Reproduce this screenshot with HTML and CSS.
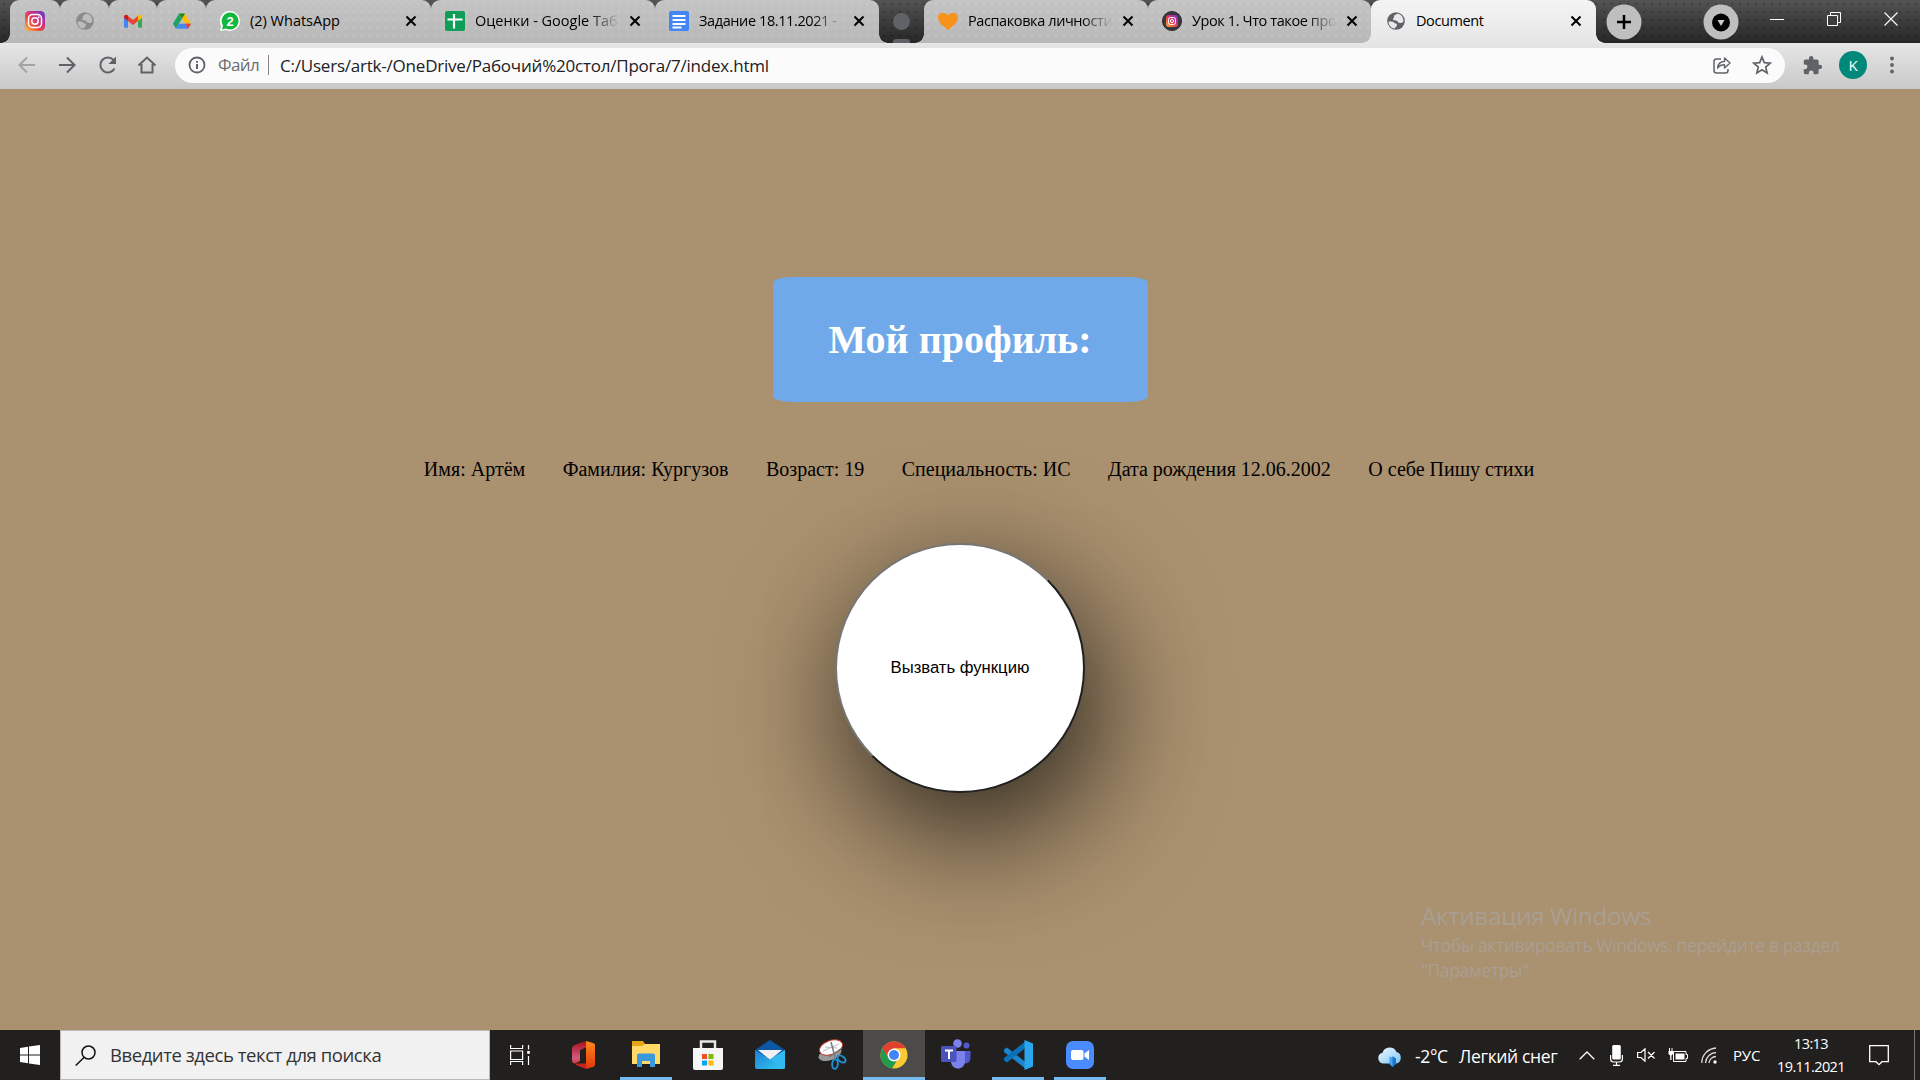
FILE: index.html
```html
<!DOCTYPE html>
<html lang="ru">
<head>
<meta charset="utf-8">
<title>Document</title>
<link rel="stylesheet" href="styles.css">
</head>
<body>
<svg class="defs" width="0" height="0">
  <defs>
    <linearGradient id="ig" x1="0" y1="1" x2="1" y2="0"><stop offset="0" stop-color="#fdc443"/><stop offset=".35" stop-color="#f0503c"/><stop offset=".65" stop-color="#c72c8e"/><stop offset="1" stop-color="#5a3fd0"/></linearGradient>
    <linearGradient id="cloud" x1="0" y1="0" x2="1" y2="1"><stop offset="0" stop-color="#f2faff"/><stop offset="1" stop-color="#7cc3f5"/></linearGradient>
    <linearGradient id="mailg" x1="0" y1="0" x2="1" y2="1"><stop offset="0" stop-color="#1e7fd0"/><stop offset="1" stop-color="#35c8f5"/></linearGradient>
    <linearGradient id="off" x1="0" y1="0" x2="0" y2="1"><stop offset="0" stop-color="#a80f1a"/><stop offset=".75" stop-color="#d05a80"/><stop offset="1" stop-color="#d23a3a"/></linearGradient>
    <linearGradient id="offr" x1="0" y1="0" x2="0" y2="1"><stop offset="0" stop-color="#ff8a1c"/><stop offset="1" stop-color="#e0360c"/></linearGradient>
    <symbol id="globe" viewBox="0 0 20 20"><circle cx="10" cy="10" r="8.800" fill="currentColor"/><path d="M2.500 10.500c2.500 0 4-.5 5.500 1s3 .5 3 2.500-2 1.500-2 3.500C5 17.500 2.500 14 2.500 10.500zM11.500 2.600c-1 1.400-3.500 1-3.500 2.900s-1 1.500-1 3 3 .5 4 1.500 1.500 2 3 2 2.500-.5 3.400-1.500c.2-4-2-7-5.900-7.900z" fill="var(--land)"/></symbol>
    <symbol id="close" viewBox="0 0 12 12"><path d="M1.500 1.500l9 9M10.500 1.500l-9 9" stroke="#000" stroke-width="2"/></symbol>
  </defs>
</svg>

<header class="strip">
  <div class="tab-group">
    <div class="tab pin w50"><svg class="fav" viewBox="0 0 20 20"><rect width="20" height="20" rx="4.500" fill="url(#ig)"/><rect x="3.500" y="3.500" width="13" height="13" rx="4" fill="none" stroke="#fff" stroke-width="1.500"/><circle cx="10" cy="10" r="3.200" fill="none" stroke="#fff" stroke-width="1.500"/><circle cx="13.800" cy="6.200" r=".9" fill="#fff"/></svg></div>
    <div class="tab pin w49"><svg class="fav dim" viewBox="0 0 20 20"><use href="#globe"/></svg></div>
    <div class="tab pin w48"><svg class="fav" viewBox="0 0 20 20"><path d="M1 5v10.500c0 .8.500 1.300 1.300 1.300H5V8z" fill="#4285f4"/><path d="M19 5v10.500c0 .8-.5 1.300-1.300 1.300H15V8z" fill="#34a853"/><path d="M5 5l5 4 5-4v5l-5 4-5-4z" fill="#ea4335"/><path d="M1 6c0-2.200 2.200-3 4-1.500v5.500L1 7z" fill="#c5221f"/><path d="M19 6c0-2.200-2.200-3-4-1.500v5.500l4-3z" fill="#fbbc04"/></svg></div>
    <div class="tab pin w49"><svg class="fav" viewBox="0 0 20 20"><path d="M7 2.500L1 12.800l3 5L10 7.500z" fill="#1ea362"/><path d="M7 2.500h6l6 10.300h-6z" fill="#ffba00"/><path d="M7 2.500h6l-3 5z" fill="#11873b"/><path d="M4 17.800l3-5h12l-3 5z" fill="#4688f4"/><path d="M13 12.800h6l-3 5z" fill="#ea4335"/></svg></div>
    <div class="tab w225"><svg class="fav" viewBox="0 0 20 20"><path d="M10 0a10 10 0 0 1 0 20 10 10 0 0 1-4-.9L0 20l1.200-5A10 10 0 0 1 10 0z" fill="#fff"/><path d="M10 1.500a8.500 8.500 0 1 1-4 16l-4 1 1-4a8.500 8.500 0 0 1 7-13z" fill="#12b83e"/><text class="badge-num" x="10" y="14.500">2</text></svg><span class="title">(2) WhatsApp</span><svg class="x"><use href="#close"/></svg></div>
    <div class="tab"><svg class="fav" viewBox="0 0 20 20"><rect width="20" height="20" rx="2" fill="#0f9d58"/><path d="M2.500 8.500h15M9 3v14.500" stroke="#fff" stroke-width="2.200"/></svg><span class="title fade">Оценки - Google Таб</span><svg class="x"><use href="#close"/></svg></div>
    <div class="tab last"><svg class="fav" viewBox="0 0 20 20"><rect width="20" height="20" rx="2" fill="#4285f4"/><path d="M3.500 5h13M3.500 9h13M3.500 13h13M3.500 16.500h9" stroke="#fff" stroke-width="1.800"/></svg><span class="title fade snug">Задание 18.11.2021 -</span><svg class="x"><use href="#close"/></svg></div>
  </div>
  <div class="group-chip"><i class="dot"></i><i class="bar"></i></div>
  <div class="tab-group second">
    <div class="tab"><svg class="fav" viewBox="0 0 20 20"><path d="M10 19C4 14.500 0 11 0 6.300 0 1 7 0 10 4.500 13 0 20 1 20 6.300 20 11 16 14.500 10 19z" fill="#f7931a"/></svg><span class="title fade snug">Распаковка личности</span><svg class="x"><use href="#close"/></svg></div>
    <div class="tab last w223"><svg class="fav" viewBox="0 0 20 20"><circle cx="10" cy="10" r="9.500" fill="#3a3640" stroke="#2a2a30"/><rect x="4" y="4" width="12" height="12" rx="3" fill="url(#ig)"/><rect x="6.500" y="6.500" width="7" height="7" rx="2" fill="none" stroke="#fff"/><circle cx="10" cy="10" r="1.600" fill="none" stroke="#fff"/></svg><span class="title fade snug">Урок 1. Что такое про</span><svg class="x"><use href="#close"/></svg></div>
  </div>
  <div class="tab-group active">
    <div class="tab last w225"><svg class="fav" viewBox="0 0 20 20"><use href="#globe"/></svg><span class="title snug">Document</span><svg class="x"><use href="#close"/></svg></div>
  </div>
  <svg class="round plus" viewBox="0 0 36 36"><circle cx="18" cy="18" r="17.500" fill="#bfbfbf"/><path d="M18 11v14M11 18h14" stroke="#000" stroke-width="2.500"/></svg>
  <svg class="round drop" viewBox="0 0 36 36"><circle cx="18" cy="18" r="17.500" fill="#bfbfbf"/><circle cx="18" cy="18.500" r="9" fill="#000"/><path d="M14.500 16h7L18 22z" fill="#ccc"/></svg>
  <svg class="wbtn" viewBox="0 0 14 14"><path d="M0 7.500h14" stroke="#fff"/></svg>
  <svg class="wbtn" viewBox="0 0 14 14"><path d="M.5 3.500h10v10h-10zM3.500 3V.5h10v10H11" fill="none" stroke="#fff"/></svg>
  <svg class="wbtn" viewBox="0 0 14 14"><path d="M.5.5l13 13M13.500.5l-13 13" stroke="#fff" stroke-width="1.100"/></svg>
</header>

<nav class="toolbar">
  <svg class="nav back" viewBox="0 0 20 20"><path d="M18 10H3M10 2.500L2.500 10l7.500 7.500" fill="none" stroke="currentColor" stroke-width="2"/></svg>
  <svg class="nav" viewBox="0 0 20 20"><path d="M2 10h15M10 2.500l7.500 7.500-7.500 7.500" fill="none" stroke="currentColor" stroke-width="2"/></svg>
  <svg class="nav reload" viewBox="0 0 20 20"><path d="M16.500 13.500A7.500 7.500 0 1 1 15.500 5" fill="none" stroke="currentColor" stroke-width="2"/><path d="M18 1.500V9h-7.500z" fill="currentColor"/></svg>
  <svg class="nav" viewBox="0 0 20 20"><path d="M1.500 10.500L10 2.500l8.500 8M4.500 9v8.500h11V9" fill="none" stroke="currentColor" stroke-width="2"/></svg>
  <div class="omnibox">
    <svg class="info" viewBox="0 0 18 18"><circle cx="9" cy="9" r="7.500" fill="none" stroke="currentColor" stroke-width="1.800"/><path d="M9 8v5M9 5v1.800" stroke="currentColor" stroke-width="2"/></svg>
    <span class="scheme">Файл</span>
    <span class="url">C:/Users/artk-/OneDrive/Рабочий%20стол/Прога/7/index.html</span>
    <svg class="act" viewBox="0 0 20 20"><path d="M9 4H4.500A2.500 2.500 0 0 0 2 6.500v9A2.500 2.500 0 0 0 4.500 18h9a2.500 2.500 0 0 0 2.500-2.500V14" fill="none" stroke="currentColor" stroke-width="1.500"/><path d="M5.500 13c.5-4.500 3-6.500 7-6.500V3l5.500 5-5.500 5V9.800c-3 0-5 .7-7 3.200z" fill="none" stroke="currentColor" stroke-width="1.400" stroke-linejoin="round"/></svg>
    <svg class="act" viewBox="0 0 20 20"><path d="M10 2l2.300 5.600 6 .5-4.600 3.900 1.400 5.900-5.100-3.200-5.100 3.200 1.400-5.900L1.700 8.100l6-.5z" fill="none" stroke="currentColor" stroke-width="1.700"/></svg>
  </div>
  <svg class="ext" viewBox="0 0 24 24"><path d="M20.500 11H19V7a2 2 0 0 0-2-2h-4V3.500a2.500 2.500 0 0 0-5 0V5H4a2 2 0 0 0-2 2v3.800h1.500a2.700 2.700 0 0 1 0 5.400H2V20a2 2 0 0 0 2 2h3.800v-1.500a2.700 2.700 0 0 1 5.400 0V22H17a2 2 0 0 0 2-2v-4h1.500a2.500 2.500 0 0 0 0-5z" fill="currentColor"/></svg>
  <span class="avatar">K</span>
  <svg class="more" viewBox="0 0 6 18"><circle cx="3" cy="2.500" r="1.900"/><circle cx="3" cy="9" r="1.900"/><circle cx="3" cy="15.500" r="1.900"/></svg>
</nav>

<main class="page">
  <h1 class="heading">Мой профиль:</h1>
  <ul class="facts">
    <li>Имя: Артём</li>
    <li>Фамилия: Кургузов</li>
    <li>Возраст: 19</li>
    <li>Специальность: ИС</li>
    <li>Дата рождения 12.06.2002</li>
    <li>О себе Пишу стихи</li>
  </ul>
  <button class="call" type="button">Вызвать функцию</button>
  <aside class="watermark">
    <p class="wm-title">Активация Windows</p>
    <p class="wm-text">Чтобы активировать Windows, перейдите в раздел<br>"Параметры".</p>
  </aside>
</main>

<footer class="taskbar">
  <div class="start"><svg width="20" height="20" viewBox="0 0 20 20" fill="#fff"><path d="M0 3l8-1.200V9.500H0zM9 1.600L20 0v9.500H9zM0 10.500h8v7.800L0 17zM9 10.500h11V20L9 18.400z"/></svg></div>
  <div class="search"><svg width="21" height="21" viewBox="0 0 21 21"><circle cx="13.500" cy="7.500" r="6.500" fill="none" stroke="#111" stroke-width="1.500"/><path d="M9 12.500L.7 20.500" stroke="#111" stroke-width="1.500"/></svg><span>Введите здесь текст для поиска</span></div>
  <div class="app view"><svg width="20" height="20" viewBox="0 0 20 20" fill="none" stroke="#fff" stroke-width="1.200"><path d="M.6 0v3.500h12V0M.6 6h12v8.500H.6zM.6 20v-3.500h12V20M18.500 0v4.500M18.500 11v9"/><path d="M17.200 6h2.600v2.800h-2.600z" fill="#fff" stroke="none"/></svg></div>
  <div class="app"><svg width="24" height="28" viewBox="0 0 24 28"><path d="M14 0v6.500L8 9v11l-5 2.500c-2 0-3-1-3-3V8c0-2 .8-3 2.500-4z" fill="url(#off)"/><path d="M3 22.500h11V28L4 24z" fill="#c62222"/><path d="M14 0l7 2c1.500.5 2 1.300 2 2.500v19c0 1.200-.5 2-2 2.500l-7 2z" fill="url(#offr)"/></svg></div>
  <div class="app open"><svg width="28" height="27" viewBox="0 0 28 27"><path d="M0 0h11l2 3h15v10H0z" fill="#e5a415"/><path d="M0 5h10l3-2h15v20H0z" fill="#ffd969"/><path d="M5 26V14.500a2 2 0 0 1 2-2h14a2 2 0 0 1 2 2V26h-5v-6h-8v6z" fill="#3a98dc"/></svg></div>
  <div class="app"><svg width="30" height="30" viewBox="0 0 30 30"><path d="M8 9V1.500h14V9" fill="none" stroke="#e8e8e8" stroke-width="2.500"/><path d="M0 8h30v20a2 2 0 0 1-2 2H2a2 2 0 0 1-2-2z" fill="#f5f5f5"/><path d="M9 14h5v5H9z" fill="#f25022"/><path d="M15.500 14h5v5h-5z" fill="#7fba00"/><path d="M9 20.500h5v5H9z" fill="#00a4ef"/><path d="M15.500 20.500h5v5h-5z" fill="#ffb900"/></svg></div>
  <div class="app"><svg width="30" height="29" viewBox="0 0 30 29"><path d="M0 10L15 0l15 10v9H0z" fill="#0b57a4"/><path d="M3 10h24L15 20z" fill="#f1f1f4"/><path d="M0 10l15 9.500L30 10v17a2 2 0 0 1-2 2H2a2 2 0 0 1-2-2z" fill="url(#mailg)"/><path d="M15 19.500L30 10v17a2 2 0 0 1-2 2z" fill="#32baf0"/></svg></div>
  <div class="app"><svg width="29" height="31" viewBox="0 0 29 31"><ellipse cx="12" cy="15" rx="12" ry="6" fill="#999" transform="rotate(-20 12 15)"/><ellipse cx="13" cy="8.500" rx="12" ry="7" fill="#fff" stroke="#c2352b" transform="rotate(-20 13 8.500)"/><path d="M5 12l16-7M7 8l12 1" stroke="#bbb"/><path d="M13 3l4 15M11 18l13-9" stroke="#777" stroke-width="1.500"/><ellipse cx="23.500" cy="20" rx="4.500" ry="2.800" transform="rotate(35 23.500 20)" fill="none" stroke="#218fd0" stroke-width="2"/><ellipse cx="17" cy="25" rx="2.800" ry="4.800" transform="rotate(5 17 25)" fill="none" stroke="#218fd0" stroke-width="2"/></svg></div>
  <div class="app open current"><svg width="28" height="28" viewBox="0 0 28 28"><circle cx="14" cy="14" r="13.500" fill="#fbc934"/><path d="M14 14L2.300 7.200A13.500 13.500 0 0 0 12 27.400L19 16z" fill="#229c4b"/><path d="M2.300 7.200A13.500 13.500 0 0 1 25.700 7.300H14l-6 9z" fill="#e0402f"/><circle cx="14" cy="14" r="6.500" fill="#fff"/><circle cx="14" cy="14" r="5" fill="#4285f4"/></svg></div>
  <div class="app"><svg width="30" height="31" viewBox="0 0 30 31"><circle cx="16.500" cy="4.500" r="4.300" fill="#7b83eb"/><circle cx="25.500" cy="6.500" r="3" fill="#5059c9"/><path d="M20 12h9.500v7c0 6-7 7-9.500 3z" fill="#5059c9"/><path d="M10 12h14v10c0 10-14 10-14 0z" fill="#7b83eb"/><rect y="7" width="15.500" height="16" rx="1.500" fill="#4b53bc"/><path d="M4 11.500h8M8 11.500v8.500" stroke="#fff" stroke-width="2"/></svg></div>
  <div class="app open"><svg width="30" height="30" viewBox="0 0 30 30"><path d="M1 9.500L4 7.500l19 15v6.500L1 12z" fill="#1a86cf"/><path d="M1 20.500L4 22.500 23 7.500V1L1 18z" fill="#0a70b8"/><path d="M21.500 0L30 3.500v23L21.500 30z" fill="#2aa6ec"/></svg></div>
  <div class="app open"><svg width="28" height="28" viewBox="0 0 28 28"><rect width="28" height="28" rx="7" fill="#4a8cff"/><rect x="5" y="9" width="12.500" height="10" rx="2" fill="#fff"/><path d="M18.500 12.500L23 9v10l-4.500-3.500z" fill="#fff"/></svg></div>
  <div class="tray">
    <svg class="weather" width="26" height="22" viewBox="0 0 26 22"><path d="M6 17.500a5.500 5.500 0 0 1-.5-10.800A7.500 7.500 0 0 1 19.500 6a6 6 0 0 1 0 11.500z" fill="url(#cloud)"/><path d="M12.500 10.500v7.500l3 3 3.500-3.500v-5z" fill="#4aa3ee"/><path d="M15.500 10v11l3.500-3.500v-5z" fill="#1976d2"/></svg>
    <span class="temp">-2°C</span><span class="cond">Легкий снег</span>
    <svg width="16" height="9" viewBox="0 0 16 9"><path d="M.7 8.300L8 1l7.300 7.300" fill="none" stroke="#fff" stroke-width="1.300"/></svg>
    <svg class="mic" width="13" height="21" viewBox="0 0 13 21"><rect x="2.200" width="8.600" height="14.500" rx="1.500" fill="#fff"/><path d="M.6 10v4a3 3 0 0 0 3 3h5.800a3 3 0 0 0 3-3v-4M6.500 17v3M3 20.300h7" fill="none" stroke="#fff" stroke-width="1.200"/></svg>
    <svg class="vol" width="19" height="14" viewBox="0 0 19 14"><path d="M.6 4.500H4L8 .8v12.400L4 9.500H.6zM11 4l6.500 6.500M17.500 4L11 10.500" fill="none" stroke="#fff" stroke-width="1.200"/></svg>
    <svg class="bat" width="20" height="15" viewBox="0 0 20 15"><path d="M5.500 3.500h12.500v3h1.500v4H18v3H5.500z" fill="none" stroke="#fff"/><path d="M7.500 5.500h9v6h-9z" fill="#fff"/><path d="M1.500 0v3M4 0v3" stroke="#fff"/><path d="M.5 3h4.500v3L3.500 7.500V12H2.200V7.500L.5 6z" fill="#fff"/></svg>
    <svg class="wifi" width="16" height="17" viewBox="0 0 16 17"><g fill="none" stroke="#ddd" stroke-width="1.300"><path d="M.8 16A15 15 0 0 1 15 1"/><path d="M4.500 16A11 11 0 0 1 15 5.500"/><path d="M8 16a7 7 0 0 1 7-6.500"/></g><circle cx="14" cy="15" r="1.700" fill="#fff"/></svg>
    <span class="lang">РУС</span>
    <div class="clock"><span>13:13</span><span>19.11.2021</span></div>
    <svg class="note" width="20" height="21" viewBox="0 0 20 21"><path d="M.7.700h18.600v16H13l-3 3-3-3H.7z" fill="none" stroke="#fff" stroke-width="1.300"/></svg>
    <i class="peek"></i>
  </div>
</footer>
</body>
</html>
```
FILE: styles.css
```css
* { box-sizing: border-box; }
body { margin: 0; width: 1920px; height: 1080px; overflow: hidden; display: flex; flex-direction: column; font-family: "Open Sans", "Noto Sans", sans-serif; }
.defs { position: absolute; }
svg { display: block; flex: none; }
span, p { white-space: nowrap; }

/* Tab strip */
.strip { height: 43px; flex: none; display: flex; align-items: center; padding-left: 10px; background: radial-gradient(circle, rgba(0,0,0,.22) 1px, transparent 1.500px) 0 0/8px 8px, linear-gradient(#535353, #262626); }
.tab-group { position: relative; display: flex; height: 43px; }
.tab-group::before, .tab-group::after { content: ""; position: absolute; bottom: 0; width: 9px; height: 9px; z-index: 1; }
.tab-group::before { left: -9px; background: radial-gradient(circle at 0 0, transparent 8.500px, #b9b9b9 9px); }
.tab-group::after { right: -9px; background: radial-gradient(circle at 100% 0, transparent 8.500px, #b9b9b9 9px); }
.tab-group.second::after { display: none; }
.tab { position: relative; display: flex; align-items: center; width: 224px; padding: 0 0 1px 14px; border-radius: 9px 9px 0 0; background: radial-gradient(circle, rgba(255,255,255,.13) 1px, transparent 1.500px) 0 0/8px 8px, linear-gradient(#c4c4c4, #b8b8b8); }
.tab::after { content: ""; position: absolute; right: -1px; top: 9px; width: 1px; height: 25px; background: #777; }
.tab.last::after { display: none; }
.tab.pin { justify-content: center; padding-left: 0; }
.tab.w50 { width: 50px; }
.tab.w49 { width: 49px; }
.tab.w48 { width: 48px; }
.tab.w223 { width: 223px; }
.tab.w225 { width: 225px; }
.fav { width: 20px; height: 20px; color: #5f6368; --land: #e8e8e8; }
.fav.dim { color: #8a8a8a; --land: #bdbdbd; }
.badge-num { font: bold 13px "Liberation Sans", sans-serif; fill: #fff; text-anchor: middle; }
.title { width: 146px; margin: -1px 0 0 10px; font-size: 14.500px; }
.title.snug { letter-spacing: -.4px; }
.title.fade { -webkit-mask-image: linear-gradient(90deg, #000 78%, transparent 99%); mask-image: linear-gradient(90deg, #000 78%, transparent 99%); }
.x { width: 12px; height: 12px; margin-left: 8px; }
.w225 .x { margin-left: 9px; }
.group-chip { position: relative; width: 45px; height: 43px; display: flex; justify-content: center; align-items: center; }
.dot { width: 17px; height: 17px; border-radius: 50%; background: #5f6368; }
.bar { position: absolute; bottom: 0; width: 17px; height: 4px; border-radius: 3px 3px 0 0; background: #5f6368; }
.active .tab { padding-left: 15px; background: linear-gradient(#f4f4f4, #e6e6e6); }
.active .x { margin-left: 8px; }
.active::before { background: radial-gradient(circle at 0 0, transparent 8.500px, #e6e6e6 9px); }
.active::after { background: radial-gradient(circle at 100% 0, transparent 8.500px, #e6e6e6 9px); }
.round { width: 36px; height: 36px; }
.plus { margin-left: 10px; }
.drop { margin: 0 31px 0 61px; }
.wbtn { width: 14px; height: 14px; margin-bottom: 6px; }
.wbtn + .wbtn { margin-left: 43px; }

/* Toolbar */
.toolbar { height: 46px; flex: none; display: flex; align-items: center; padding: 0 25px 2px 17px; background: linear-gradient(#e6e6e6, #c9c9c9); color: #5f6368; }
.nav { width: 20px; height: 20px; margin-right: 20px; }
.nav.back { color: #a3a3a3; }
.nav.reload { margin: 0 19px 0 1px; }
.omnibox { flex: none; width: 1610px; height: 35px; margin-left: -2px; border-radius: 18px; background: #fbfbfb; display: flex; align-items: center; padding: 0 13px 0 13px; }
.info { width: 18px; height: 18px; }
.scheme { width: 51px; margin-left: 12px; border-right: 1px solid #888; font-size: 17px; line-height: 20px; letter-spacing: -.6px; color: #6a6d71; }
.url { flex: 1; margin-left: 11px; font-size: 17px; letter-spacing: -.215px; color: #202124; }
.act { width: 20px; height: 20px; margin-left: 20px; }
.ext { width: 21px; height: 21px; margin-left: 17px; }
.avatar { width: 28px; height: 28px; margin-left: 16px; border-radius: 50%; background: #00897b; color: #fff; font-size: 15px; line-height: 28px; text-align: center; }
.more { width: 6px; height: 18px; margin-left: 22px; fill: #5f6368; }

/* Page */
.page { position: relative; flex: 1; display: flex; flex-direction: column; align-items: center; padding-top: 188px; background: #aa916f; font-family: "Liberation Serif", serif; }
.heading { width: 375px; height: 125px; margin: 0 0 56px; border-radius: 5%; background: #70a9e9; color: #fff; font-size: 40px; line-height: 125px; text-align: center; }
.facts { display: flex; gap: 37.500px; margin: 0; padding: 0 0 0 38px; list-style: none; font-size: 20px; line-height: 23px; color: #000; }
.call { width: 250px; height: 250px; margin-top: 62px; border: 2px solid; border-color: #767676 #212121 #212121 #767676; border-radius: 50%; background: #fff; box-shadow: 14px 38px 125px rgba(0,0,0,.78); font: 16.670px "Liberation Sans", sans-serif; color: #000; }
.watermark { position: absolute; left: 1421px; top: 811px; font-family: "Open Sans", sans-serif; color: #a99f92; }
.watermark p { margin: 0; }
.wm-title { font-size: 24.500px; line-height: 32px; letter-spacing: -.48px; }
.watermark .wm-text { margin-top: 1px; font-size: 17.500px; line-height: 25px; letter-spacing: -.38px; }

/* Taskbar */
.taskbar { height: 50px; flex: none; display: flex; background: #22201f; color: #fff; }
.start { width: 60px; display: flex; align-items: center; justify-content: center; }
.search { width: 430px; display: flex; align-items: center; gap: 14px; padding-left: 14px; border: 1px solid #b8b8b8; background: #f1f1f1; color: #333; font-size: 18.500px; letter-spacing: -.43px; }
.search span { margin-top: -2px; }
.app { position: relative; width: 62px; padding-bottom: 1px; display: flex; align-items: center; justify-content: center; }
.app.view { width: 63px; padding-right: 3px; }
.app.open::after { content: ""; position: absolute; left: 5px; right: 5px; bottom: 0; height: 3px; background: #76b9ed; }
.app.current { background: #4c4b4a; }
.app.current::after { left: 0; right: 0; }
.tray { margin-left: auto; display: flex; align-items: center; font-size: 17.500px; letter-spacing: -.35px; }
.weather { margin-top: 3px; }
.temp { width: 44px; margin: 2px 0 0 12px; }
.cond { width: 120px; margin-top: 2px; }
.mic { margin-left: 15px; }
.vol { margin-left: 14px; }
.bat { margin-left: 12px; }
.wifi { margin-left: 13px; }
.lang { width: 43px; margin-left: 16px; font-size: 15px; letter-spacing: -.2px; }
.clock { width: 70px; display: flex; flex-direction: column; align-items: center; font-size: 14.500px; line-height: 23px; letter-spacing: -.6px; }
.note { margin-left: 23px; }
.peek { width: 1px; height: 50px; margin: 0 5px 0 25px; background: #777; }
```
